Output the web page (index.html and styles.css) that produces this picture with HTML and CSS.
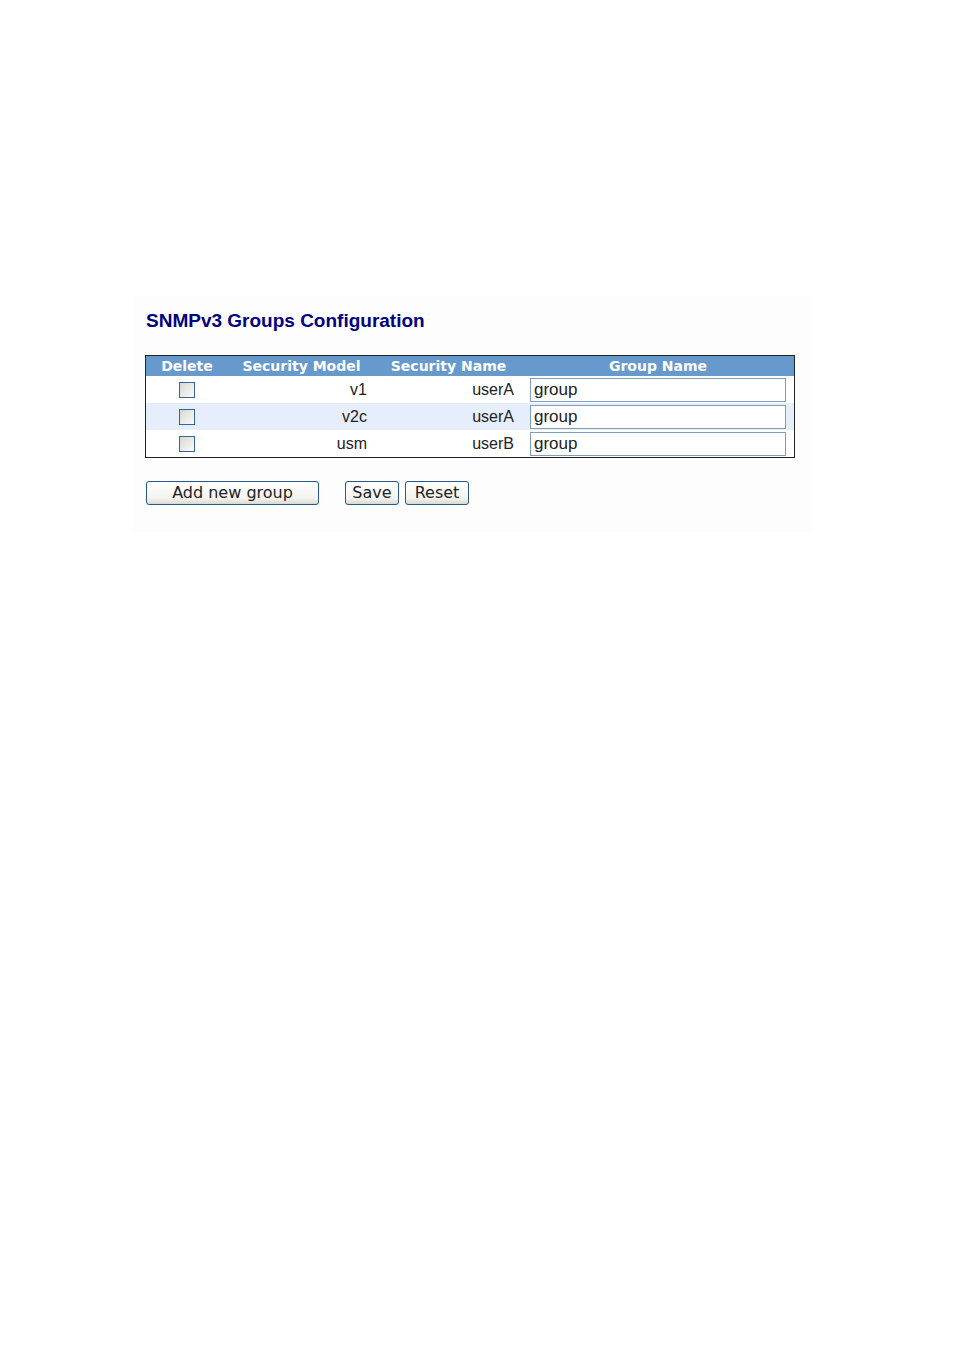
FILE: index.html
```html
<!DOCTYPE html>
<html lang="en">
<head>
    <meta charset="UTF-8">
    <meta name="viewport" content="width=device-width, initial-scale=1.0">
    <title>SNMPv3 Groups Configuration</title>
    <link rel="stylesheet" href="styles.css">
</head>
<body>
    <form class="panel">
        <h1>SNMPv3 Groups Configuration</h1>

        <table class="groups-table">
            <colgroup>
                <col class="col-delete">
                <col class="col-model">
                <col class="col-name">
                <col class="col-group">
            </colgroup>
            <thead>
                <tr>
                    <th>Delete</th>
                    <th>Security Model</th>
                    <th>Security Name</th>
                    <th>Group Name</th>
                </tr>
            </thead>
            <tbody>
                <tr>
                    <td class="delete-cell"><input type="checkbox" name="delete_1" aria-label="Delete v1 userA"></td>
                    <td>v1</td>
                    <td>userA</td>
                    <td class="group-cell"><input type="text" name="group_1" value="group" aria-label="Group name for v1 userA"></td>
                </tr>
                <tr>
                    <td class="delete-cell"><input type="checkbox" name="delete_2" aria-label="Delete v2c userA"></td>
                    <td>v2c</td>
                    <td>userA</td>
                    <td class="group-cell"><input type="text" name="group_2" value="group" aria-label="Group name for v2c userA"></td>
                </tr>
                <tr>
                    <td class="delete-cell"><input type="checkbox" name="delete_3" aria-label="Delete usm userB"></td>
                    <td>usm</td>
                    <td>userB</td>
                    <td class="group-cell"><input type="text" name="group_3" value="group" aria-label="Group name for usm userB"></td>
                </tr>
            </tbody>
        </table>

        <div class="controls">
            <button type="button" class="btn add-btn">Add new group</button>
            <button type="submit" class="btn save-btn">Save</button>
            <button type="reset" class="btn reset-btn">Reset</button>
        </div>
    </form>
</body>
</html>
```

FILE: styles.css
```css
body {
    margin: 0;
    padding: 296px 140px 0 133px;
    background: #ffffff;
    color: #222222;
    font-family: "Liberation Sans", Arial, sans-serif;
    font-size: 16px;
}

.panel {
    padding: 12px 19px 27px 12px;
    background: #fdfdfd;
}

h1 {
    margin: 0 0 22px;
    padding-left: 1px;
    color: #000080;
    font-size: 19px;
    line-height: 25px;
}

.groups-table {
    width: 100%;
    table-layout: fixed;
    border: 1px solid #222222;
    border-spacing: 0;
}

.col-delete {
    width: 82px;
}

.col-model,
.col-name {
    width: 147px;
}

.groups-table th {
    height: 20px;
    padding: 1px 0 0;
    box-sizing: border-box;
    background: #6699cc;
    color: #ffffff;
    font-family: "DejaVu Sans", Verdana, sans-serif;
    font-size: 14px;
    line-height: 19px;
}

.groups-table td {
    height: 27px;
    padding: 0 8px;
    line-height: 24px;
    text-align: right;
}

.groups-table tbody tr {
    background: #ffffff;
}

.groups-table tbody tr:nth-child(even) {
    background: #e6edfb;
}

.groups-table .delete-cell {
    text-align: center;
}

.groups-table input {
    box-sizing: border-box;
    margin: 0;
    vertical-align: middle;
}

.groups-table input[type="checkbox"] {
    appearance: none;
    width: 16px;
    height: 16px;
    border: 1px solid #336699;
    background: linear-gradient(135deg, #d8d8d2, #fbfbfa);
}

.groups-table input[type="checkbox"]:checked {
    background: #21a121;
}

.groups-table input[type="text"] {
    display: block;
    width: 100%;
    height: 24px;
    padding: 0 3px;
    border: 1px solid #7f9db9;
    background: #ffffff;
    color: #222222;
    font-family: inherit;
    font-size: 17px;
}

.controls {
    display: flex;
    margin-top: 23px;
    padding-left: 1px;
}

.btn {
    height: 24px;
    padding: 0;
    border: 1px solid #245a8c;
    border-radius: 3px;
    background: linear-gradient(#ffffff, #f3f3ee 75%, #dad8cf);
    color: #222222;
    font-family: "DejaVu Sans", Verdana, sans-serif;
    font-size: 16px;
    line-height: 22px;
    cursor: pointer;
}

.add-btn {
    width: 173px;
    margin-right: 26px;
}

.save-btn {
    width: 54px;
    margin-right: 6px;
}

.reset-btn {
    width: 64px;
}
```
